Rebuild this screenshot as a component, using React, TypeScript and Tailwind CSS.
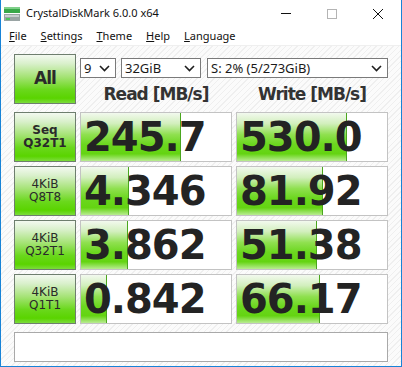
import React from 'react';

type Row = { l1: string; l2: string; bold?: boolean; read: string; write: string; rw: number; ww: number };

const rows: Row[] = [
  { l1: 'Seq', l2: 'Q32T1', bold: true, read: '245.7', write: '530.0', rw: 100, ww: 110 },
  { l1: '4KiB', l2: 'Q8T8', read: '4.346', write: '81.92', rw: 48, ww: 86 },
  { l1: '4KiB', l2: 'Q32T1', read: '3.862', write: '51.38', rw: 47, ww: 80 },
  { l1: '4KiB', l2: 'Q1T1', read: '0.842', write: '66.17', rw: 26, ww: 83 },
];

const greenBtn =
  'border border-[#6e7e6e] bg-[linear-gradient(to_bottom,#f3f9f0_0%,#d9f0cb_18%,#a6e377_45%,#6ad81c_72%,#5ad400_90%,#7cdc3c_100%)] text-[#2a2a2a]';

function Chevron() {
  return (
    <svg width="11" height="7" viewBox="0 0 11 7" className="shrink-0">
      <polyline points="1,1 5.5,5.5 10,1" fill="none" stroke="#1e1e1e" strokeWidth="1.6" />
    </svg>
  );
}

function Combo({ text, w }: { text: string; w: string }) {
  return (
    <div className={`${w} h-[20px] border border-[#7a7a7a] bg-white flex items-center justify-between pl-[3px] pr-[5px]`}>
      <span className="font-['Noto_Sans',sans-serif] text-[13px] leading-none text-[#1a1a1a]">{text}</span>
      <Chevron />
    </div>
  );
}

function ValueBox({ value, bar }: { value: string; bar: number }) {
  return (
    <div className="relative h-[50px] border border-[#c3c3c3] bg-white overflow-hidden flex items-center">
      {/* bar */}
      <div
        className="absolute left-0 top-0 bottom-0 border-r border-[#4aa61e] bg-[linear-gradient(to_bottom,#f2f9ee_0%,#d2efbd_22%,#8fe04f_45%,#6cd71f_65%,#64d412_85%,#b9ec92_100%)]"
        style={{ width: bar }}
      />
      <span className="relative pl-[3px] font-['DejaVu_Sans',sans-serif] font-bold text-[40px] leading-none tracking-[-1px] text-[#232323]">
        {value}
      </span>
    </div>
  );
}

export default function App() {
  return (
    <div className="w-[402px] h-[367px] border-x border-b border-[#1883d7] bg-white flex flex-col overflow-hidden">
      {/* title bar */}
      <div className="h-[27px] flex items-center shrink-0">
        <svg width="16" height="14" viewBox="0 0 16 14" className="ml-[3px] mt-[1px]">
          <rect x="0" y="0" width="16" height="6" fill="#3aa84a" />
          <rect x="0" y="0" width="16" height="2" fill="#7fd08a" />
          <rect x="0" y="7" width="16" height="7" fill="#9aa4a4" />
          <rect x="1" y="8" width="14" height="2" fill="#c8cfcf" />
          <rect x="2" y="11" width="4" height="2" fill="#4cc85a" />
        </svg>
        <span className="ml-[6px] font-['Noto_Sans',sans-serif] text-[11px] text-[#111]">CrystalDiskMark 6.0.0 x64</span>
        <div className="ml-auto flex h-full">
          <div className="w-[46px] flex items-center justify-center">
            <div className="w-[10px] h-px bg-[#111]" />
          </div>
          <div className="w-[46px] flex items-center justify-center">
            <div className="w-[10px] h-[10px] border border-[#b4b4b4]" />
          </div>
          <div className="w-[46px] flex items-center justify-center">
            <svg width="10" height="10" viewBox="0 0 10 10">
              <line x1="0" y1="0" x2="10" y2="10" stroke="#111" strokeWidth="1" />
              <line x1="10" y1="0" x2="0" y2="10" stroke="#111" strokeWidth="1" />
            </svg>
          </div>
        </div>
      </div>

      {/* menu bar */}
      <div className="h-[18px] flex items-center gap-[14px] pl-[8px] font-['Noto_Sans',sans-serif] text-[11px] text-[#111] shrink-0">
        <span><u>F</u>ile</span>
        <span><u>S</u>ettings</span>
        <span><u>T</u>heme</span>
        <span><u>H</u>elp</span>
        <span><u>L</u>anguage</span>
      </div>
      <div className="h-px bg-[#efefef] shrink-0" />

      {/* content */}
      <div className="flex-1 pt-[8px] pl-[13px] bg-[#f8f8f8] bg-[image:repeating-linear-gradient(-45deg,#fbfbfb_0px,#fbfbfb_3px,#efefef_3px,#efefef_4px)]">
        <div className="grid grid-cols-[62px_152px_152px] gap-x-[4px] gap-y-[4px]">
          <div className={`${greenBtn} h-[50px] flex items-center justify-center font-['DejaVu_Sans',sans-serif] font-bold text-[17px] tracking-[-1px]`}>
            All
          </div>
          <div className="col-span-2 flex flex-col">
            <div className="flex mt-[4px] gap-[5px]">
              <Combo text="9" w="w-[36px]" />
              <Combo text="32GiB" w="w-[80px]" />
              <div className="ml-px">
                <Combo text="S: 2% (5/273GiB)" w="w-[181px]" />
              </div>
            </div>
            <div className="grid grid-cols-2 gap-x-[4px] flex-1 items-center pt-[4px] font-['DejaVu_Sans',sans-serif] font-bold text-[17px] tracking-[-1px] text-[#333]">
              <div className="text-center">Read [MB/s]</div>
              <div className="text-center">Write [MB/s]</div>
            </div>
          </div>

          {rows.map((r, i) => (
            <React.Fragment key={i}>
              <div
                className={`${greenBtn} h-[50px] flex flex-col items-center justify-center font-['DejaVu_Sans',sans-serif] text-[12px] leading-[13px] ${
                  r.bold ? 'font-bold' : 'font-normal'
                }`}
              >
                <span>{r.l1}</span>
                <span>{r.l2}</span>
              </div>
              <ValueBox value={r.read} bar={r.rw} />
              <ValueBox value={r.write} bar={r.ww} />
            </React.Fragment>
          ))}
        </div>

        {/* comment */}
        <div className="mt-[8px] w-[374px] h-[30px] border border-[#a9a9a9] bg-white" />
      </div>
    </div>
  );
}
